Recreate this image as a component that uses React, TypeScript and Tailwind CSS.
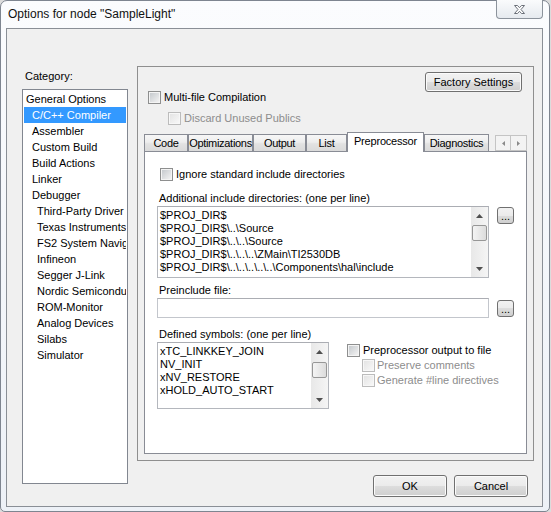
import React from 'react';

type Item = { label: string; level: number; selected?: boolean };

const categories: Item[] = [
  { label: 'General Options', level: 0 },
  { label: 'C/C++ Compiler', level: 1, selected: true },
  { label: 'Assembler', level: 1 },
  { label: 'Custom Build', level: 1 },
  { label: 'Build Actions', level: 1 },
  { label: 'Linker', level: 1 },
  { label: 'Debugger', level: 1 },
  { label: 'Third-Party Driver', level: 2 },
  { label: 'Texas Instruments', level: 2 },
  { label: 'FS2 System Navigator', level: 2 },
  { label: 'Infineon', level: 2 },
  { label: 'Segger J-Link', level: 2 },
  { label: 'Nordic Semiconductor', level: 2 },
  { label: 'ROM-Monitor', level: 2 },
  { label: 'Analog Devices', level: 2 },
  { label: 'Silabs', level: 2 },
  { label: 'Simulator', level: 2 },
];

const includeDirs = [
  '$PROJ_DIR$',
  '$PROJ_DIR$\\..\\Source',
  '$PROJ_DIR$\\..\\..\\Source',
  '$PROJ_DIR$\\..\\..\\..\\ZMain\\TI2530DB',
  '$PROJ_DIR$\\..\\..\\..\\..\\..\\Components\\hal\\include',
];

const symbols = ['xTC_LINKKEY_JOIN', 'NV_INIT', 'xNV_RESTORE', 'xHOLD_AUTO_START'];

const tabs = [
  { label: 'Code', w: 'w-[44px]' },
  { label: 'Optimizations', w: 'w-[65px]' },
  { label: 'Output', w: 'w-[53px]' },
  { label: 'List', w: 'w-[41px]' },
  { label: 'Preprocessor', w: 'w-[77px]', active: true },
  { label: 'Diagnostics', w: 'w-[65px]' },
];

function CheckBox({ disabled }: { disabled?: boolean }) {
  if (disabled) {
    return (
      <span className="flex h-[13px] w-[13px] shrink-0 border border-[#bcbcbc] bg-[#f7f7f7] p-[1px]">
        <span className="flex-1 bg-[linear-gradient(135deg,#e4e4e4,#f7f7f7)]" />
      </span>
    );
  }
  return (
    <span className="flex h-[13px] w-[13px] shrink-0 border border-[#8e8f8f] bg-[#f4f4f4] p-[1px]">
      <span className="flex-1 bg-[linear-gradient(135deg,#c6cace,#f2f2f2)]" />
    </span>
  );
}

function Arrow({ dir }: { dir: 'up' | 'down' }) {
  return (
    <svg width="7" height="4" viewBox="0 0 7 4">
      {dir === 'up' ? <polygon points="0,4 3.5,0 7,4" fill="#4f4f4f" /> : <polygon points="0,0 3.5,4 7,0" fill="#4f4f4f" />}
    </svg>
  );
}

function ScrollBar({ gap }: { gap: string }) {
  return (
    <div className="flex w-[17px] shrink-0 flex-col bg-[linear-gradient(to_right,#e8e8e8,#f5f5f5)]">
      <div className="flex h-[17px] items-center justify-center">
        <Arrow dir="up" />
      </div>
      <div className="flex-1">
        <div className={`${gap} mx-[1px] h-[16px] rounded-[2px] border border-[#979797] bg-[linear-gradient(to_right,#f4f4f4,#dcdcdc)]`} />
      </div>
      <div className="flex h-[17px] items-center justify-center">
        <Arrow dir="down" />
      </div>
    </div>
  );
}

function Button({ label, className }: { label: string; className: string }) {
  return (
    <div
      className={`${className} flex items-center justify-center rounded-[3px] border border-[#707070] bg-[linear-gradient(#f2f2f2,#ebebeb_50%,#dddddd_50%,#cfcfcf)] shadow-[inset_0_0_0_1px_#fbfbfb]`}
    >
      {label}
    </div>
  );
}

function DotsButton({ className }: { className: string }) {
  return (
    <div
      className={`${className} flex h-[17px] w-[17px] items-end justify-center rounded-[3px] border border-[#707070] bg-[linear-gradient(#f2f2f2,#ebebeb_50%,#dddddd_50%,#cfcfcf)] pb-[3px] text-[11px] leading-[8px]`}
    >
      ...
    </div>
  );
}

export default function App() {
  return (
    <div className="h-[512px] w-[551px] overflow-hidden bg-[#dcdcdc] text-[11px] leading-[13px] text-black [font-family:'Liberation_Sans',Arial,sans-serif]">
      <div className="flex h-[512px] w-[550px] flex-col rounded-t-[7px] rounded-b-[5px] border border-[#7e8590] bg-[linear-gradient(to_bottom,#fbfcfe,#edf1f7)]">
        {/* title bar */}
        <div className="flex h-[27px] items-start justify-between">
          <div className="pl-[7px] pt-[6px] text-[12px] leading-[15px] text-[#111]">Options for node "SampleLight"</div>
          <div className="-mt-[1px] mr-[6px] flex h-[19px] w-[47px] items-center justify-center rounded-b-[4px] border border-t-0 border-[#8c939c] bg-[linear-gradient(#fafbfc,#e6eaef)]">
            <svg width="13" height="11" viewBox="0 0 13 11">
              <path
                d="M1.5 1.5h3l2 2.2 2-2.2h3l-3.5 4 3.5 4h-3l-2-2.2-2 2.2h-3l3.5-4z"
                fill="#fff"
                stroke="#6b7079"
                strokeWidth="1"
                strokeLinejoin="round"
              />
            </svg>
          </div>
        </div>

        {/* client area */}
        <div className="ml-[5px] flex h-[479px] w-[537px] border border-[#8a8f96] bg-[#f0f0f0]">
          {/* category column */}
          <div className="flex flex-col pl-[15px] pt-[41px]">
            <div className="pl-[3px]">Category:</div>
            <div className="mt-[6px] flex h-[395px] w-[106px] flex-col overflow-hidden border border-[#828790] bg-white pt-[1px]">
              {categories.map(c => (
                <div
                  key={c.label}
                  className={`mx-[1px] h-[16px] shrink-0 overflow-hidden whitespace-nowrap leading-[16px] ${
                    c.selected ? 'bg-[#3399ff] text-white' : ''
                  } ${c.level === 0 ? 'pl-[2px]' : c.level === 1 ? 'pl-[8px]' : 'pl-[13px]'}`}
                >
                  {c.label}
                </div>
              ))}
            </div>
          </div>

          {/* options column */}
          <div className="ml-[9px] flex flex-col pt-[37px]">
            <div className="flex h-[395px] w-[397px] flex-col border border-[#8f8f8f]">
              <div className="flex justify-between">
                <div className="flex flex-col pl-[10px] pt-[24px]">
                  <div className="flex h-[13px] items-center gap-[3px]">
                    <CheckBox />
                    <span>Multi-file Compilation</span>
                  </div>
                  <div className="mt-[8px] flex h-[13px] items-center gap-[3px] pl-[20px] text-[#8d8d8d]">
                    <CheckBox disabled />
                    <span>Discard Unused Publics</span>
                  </div>
                </div>
                <Button label="Factory Settings" className="mr-[11px] mt-[5px] h-[20px] w-[97px]" />
              </div>

              {/* tab strip */}
              <div className="mt-[7px] flex h-[19px] items-end pl-[6px] pr-[6px]">
                {tabs.map(t =>
                  t.active ? (
                    <div
                      key={t.label}
                      className={`${t.w} relative z-10 -mb-[1px] flex h-[20px] items-center justify-center whitespace-nowrap border border-b-0 border-[#898c95] bg-white pb-[2px] tracking-[-0.2px]`}
                    >
                      {t.label}
                    </div>
                  ) : (
                    <div
                      key={t.label}
                      className={`${t.w} flex h-[17px] items-center justify-center whitespace-nowrap border border-b-0 border-[#898c95] bg-[linear-gradient(#f7f7f7,#ededed_45%,#e2e2e2_55%,#dadada)] tracking-[-0.3px]`}
                    >
                      {t.label}
                    </div>
                  ),
                )}
                <div className="ml-auto flex h-[16px]">
                  <div className="flex w-[16px] items-center justify-center border border-[#c4c4c4] bg-[#f3f3f3]">
                    <svg width="3" height="5" viewBox="0 0 3 5">
                      <polygon points="3,0 0,2.5 3,5" fill="#8a8a8a" />
                    </svg>
                  </div>
                  <div className="flex w-[16px] items-center justify-center border border-l-0 border-[#c4c4c4] bg-[#f3f3f3]">
                    <svg width="3" height="5" viewBox="0 0 3 5">
                      <polygon points="0,0 3,2.5 0,5" fill="#8a8a8a" />
                    </svg>
                  </div>
                </div>
              </div>

              {/* tab page */}
              <div className="mx-[6px] flex h-[303px] flex-col border border-[#898c95] bg-white">
                <div className="flex h-[13px] items-center gap-[3px] pl-[15px] mt-[16px]">
                  <CheckBox />
                  <span>Ignore standard include directories</span>
                </div>

                <div className="mt-[11px] pl-[14px]">Additional include directories: (one per line)</div>
                <div className="mt-[1px] flex items-start pl-[12px]">
                  <div className="flex h-[72px] w-[332px] border border-[#b4b7bd] border-t-[#abadb3]">
                    <div className="flex-1 overflow-hidden whitespace-nowrap pl-[2px] pt-[2px]">
                      {includeDirs.map(d => (
                        <div key={d}>{d}</div>
                      ))}
                    </div>
                    <ScrollBar gap="mt-[1px]" />
                  </div>
                  <DotsButton className="ml-[8px] mt-[1px]" />
                </div>

                <div className="mt-[6px] pl-[14px]">Preinclude file:</div>
                <div className="mt-[1px] flex items-start pl-[12px]">
                  <div className="h-[20px] w-[332px] border border-[#c3c6cc] border-t-[#abadb3]" />
                  <DotsButton className="ml-[8px] mt-[2px]" />
                </div>

                <div className="mt-[10px] pl-[14px]">Defined symbols: (one per line)</div>
                <div className="mt-[1px] flex items-start pl-[12px]">
                  <div className="flex h-[67px] w-[172px] border border-[#b4b7bd] border-t-[#abadb3]">
                    <div className="flex-1 overflow-hidden whitespace-nowrap pl-[2px] pt-[2px]">
                      {symbols.map(s => (
                        <div key={s}>{s}</div>
                      ))}
                    </div>
                    <ScrollBar gap="mt-[2px]" />
                  </div>
                  <div className="ml-[18px] flex flex-col pt-[2px]">
                    <div className="flex h-[13px] items-center gap-[3px]">
                      <CheckBox />
                      <span>Preprocessor output to file</span>
                    </div>
                    <div className="mt-[2px] flex h-[13px] items-center gap-[2px] pl-[15px] text-[#8d8d8d]">
                      <CheckBox disabled />
                      <span>Preserve comments</span>
                    </div>
                    <div className="mt-[2px] flex h-[13px] items-center gap-[2px] pl-[15px] text-[#8d8d8d]">
                      <CheckBox disabled />
                      <span>Generate #line directives</span>
                    </div>
                  </div>
                </div>
              </div>
            </div>

            <div className="mt-[14px] flex justify-end gap-[7px] pr-[6px]">
              <Button label="OK" className="h-[22px] w-[74px]" />
              <Button label="Cancel" className="h-[22px] w-[74px]" />
            </div>
          </div>
        </div>
      </div>
    </div>
  );
}
